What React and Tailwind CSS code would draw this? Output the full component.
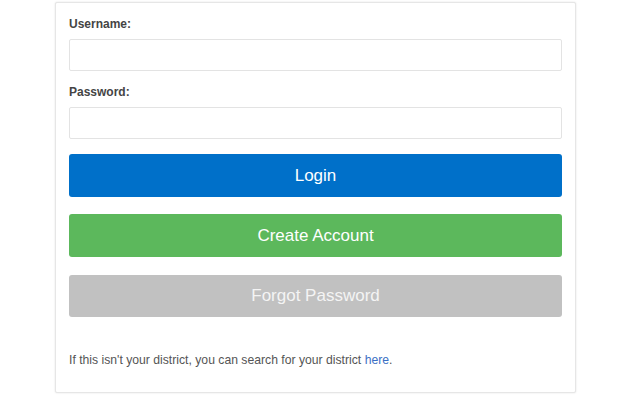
import React from "react";

const font = { fontFamily: '"Liberation Sans", Arial, sans-serif' };

export default function App() {
  return (
    <div className="min-h-[400px] bg-white pt-[2px]" style={font}>
      <div className="ml-[55px] w-[521px] rounded-[2px] border border-[#e6e6e6] bg-white px-[13px] pt-[13px] pb-[23px] shadow-[0_0_2px_rgba(0,0,0,0.12)]">
        <label className="mb-[6px] block text-[12px] leading-[17px] font-bold text-[#444]">
          Username:
        </label>
        <input
          type="text"
          className="block h-[32px] w-full rounded-[2px] border border-[#e3e3e3] bg-white px-2 outline-none"
        />
        <label className="mt-[13px] mb-[6px] block text-[12px] leading-[17px] font-bold text-[#444]">
          Password:
        </label>
        <input
          type="password"
          className="block h-[32px] w-full rounded-[2px] border border-[#e3e3e3] bg-white px-2 outline-none"
        />
        <button className="mt-[15px] block h-[43px] w-full rounded-[3px] bg-[#0070c9] text-[17px] text-white">
          Login
        </button>
        <button className="mt-[17px] block h-[43px] w-full rounded-[3px] bg-[#5cb85c] text-[17px] text-white">
          Create Account
        </button>
        <button className="mt-[18px] block h-[42px] w-full rounded-[3px] bg-[#c1c1c1] text-[17px] text-[#f4f4f4]">
          Forgot Password
        </button>
        <p className="mt-[35px] text-[12.2px] leading-[17px] text-[#555]">
          If this isn't your district, you can search for your district{" "}
          <a href="#" className="text-[#3b6fc4]">
            here
          </a>
          .
        </p>
      </div>
    </div>
  );
}
